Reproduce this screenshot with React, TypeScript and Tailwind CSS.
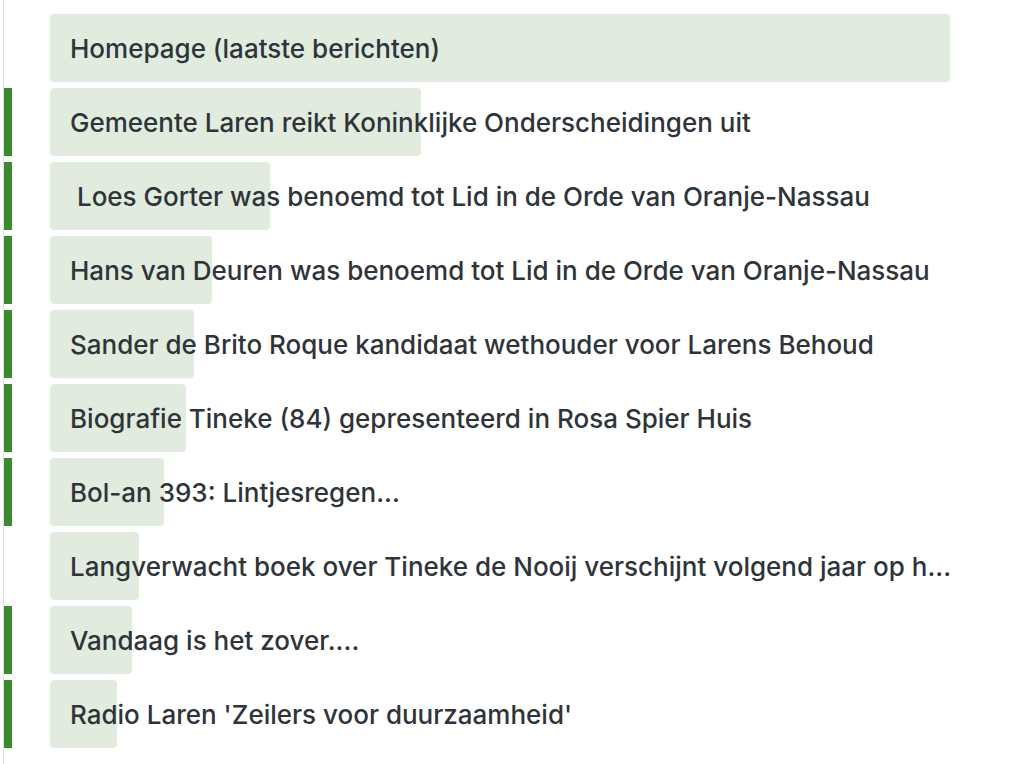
import React from 'react'

type Item = {
  title: string
  fill: number
  marked: boolean
}

const items: Item[] = [
  { title: 'Homepage (laatste berichten)', fill: 900, marked: false },
  { title: 'Gemeente Laren reikt Koninklijke Onderscheidingen uit', fill: 371, marked: true },
  { title: ' Loes Gorter was benoemd tot Lid in de Orde van Oranje-Nassau', fill: 220, marked: true },
  { title: 'Hans van Deuren was benoemd tot Lid in de Orde van Oranje-Nassau', fill: 162, marked: true },
  { title: 'Sander de Brito Roque kandidaat wethouder voor Larens Behoud', fill: 144, marked: true },
  { title: 'Biografie Tineke (84) gepresenteerd in Rosa Spier Huis', fill: 136, marked: true },
  { title: 'Bol-an 393: Lintjesregen...', fill: 114, marked: true },
  { title: 'Langverwacht boek over Tineke de Nooij verschijnt volgend jaar op h...', fill: 89, marked: false },
  { title: 'Vandaag is het zover....', fill: 82, marked: true },
  { title: "Radio Laren 'Zeilers voor duurzaamheid'", fill: 67, marked: true },
]

export default function App() {
  return (
    <div className="min-h-[764px] w-[1024px] bg-white pl-[3px] font-['Inter','Liberation_Sans',sans-serif]">
      <div className="flex min-h-[764px] flex-col gap-[6px] border-l border-[#dcdcdc] pt-[14px]">
        {items.map((item, index) => (
          <div key={index} className="flex h-[68px] items-stretch">
            <div className={`w-2 ${item.marked ? 'bg-[#3a8a2e]' : ''}`} />
            <div className="ml-[38px] grid w-[900px]">
              <div
                className="h-[68px] rounded-[4px] bg-[#e1ecdf] [grid-area:1/1]"
                style={{ width: item.fill }}
              />
              <div className="flex items-center whitespace-pre pl-5 text-[26px] font-medium text-[#2e343a] [grid-area:1/1]">
                {item.title}
              </div>
            </div>
          </div>
        ))}
      </div>
    </div>
  )
}
